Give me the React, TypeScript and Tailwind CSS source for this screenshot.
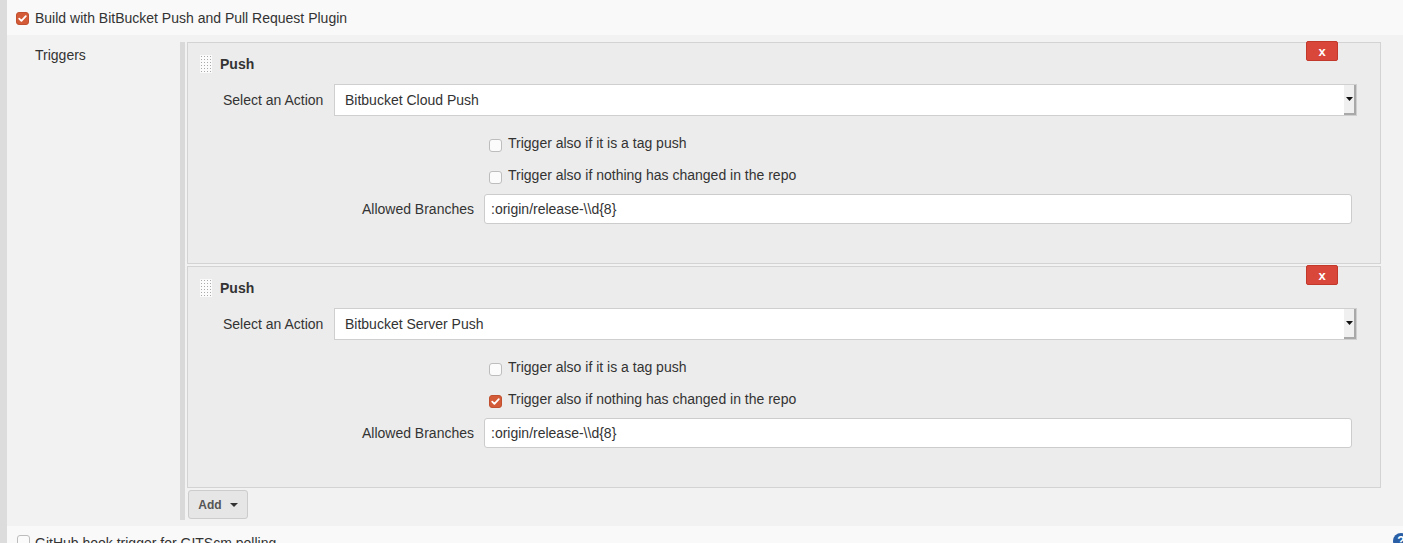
import React from "react";

function Check({ checked }: { checked?: boolean }) {
  if (checked) {
    return (
      <svg width="13" height="13" viewBox="0 0 13 13" className="shrink-0">
        <rect x="0.5" y="0.5" width="12" height="12" rx="2.5" fill="#d35b37" stroke="#c0502f" />
        <path d="M3.2 6.6 L5.4 8.8 L9.8 4.2" fill="none" stroke="#fff" strokeWidth="1.8" strokeLinecap="round" strokeLinejoin="round" />
      </svg>
    );
  }
  return (
    <svg width="13" height="13" viewBox="0 0 13 13" className="shrink-0">
      <rect x="0.5" y="0.5" width="12" height="12" rx="2.5" fill="#fbfbfb" stroke="#bdbdbd" />
    </svg>
  );
}

function Handle() {
  const dots: React.ReactElement[] = [];
  for (let r = 0; r < 6; r++) {
    for (let c = 0; c < 4; c++) {
      dots.push(<rect key={`${r}-${c}`} x={1 + c * 3} y={1 + r * 3} width="1" height="1" fill="#a8a8a8" />);
    }
  }
  return (
    <svg width="12" height="18" viewBox="0 0 12 18" className="shrink-0">
      <rect width="12" height="18" fill="#fbfbfb" />
      {dots}
    </svg>
  );
}

function Panel({ action, nothingChecked }: { action: string; nothingChecked?: boolean }) {
  return (
    <div className="relative h-[222px] shrink-0 border border-[#d3d3d3] bg-[#ececec]">
      <div className="absolute right-[42px] top-[-2px] flex h-[20px] w-[32px] items-center justify-center rounded-[2px] border border-[#c2392c] bg-[#d9463a] text-[13px] font-bold leading-none text-white">
        x
      </div>
      <div className="mt-[12px] flex h-[18px] items-center pl-[12px]">
        <Handle />
        <span className="ml-[8px] text-[14px] font-bold leading-4 text-[#333]">Push</span>
      </div>
      <div className="mt-[11px] flex h-[32px] items-center">
        <div className="w-[146px] pl-[35px] text-[14px] text-[#333]">Select an Action</div>
        <div className="flex h-[32px] w-[1023px] items-stretch border border-[#cfcfcf] bg-white">
          <div className="flex flex-1 items-center pl-[10px] text-[14px] text-[#333]">{action}</div>
          <div className="flex w-[12px] items-center justify-center border-b-[2px] border-r-[2px] border-[#a9a9a9] bg-[#f0f0f0]">
            <svg width="7" height="4" viewBox="0 0 7 4">
              <path d="M0 0 H7 L3.5 4 Z" fill="#111" />
            </svg>
          </div>
        </div>
      </div>
      <div className="mt-[11px] flex h-[32px] items-center pl-[301px]">
        <div className="mt-[5px]">
          <Check />
        </div>
        <span className="ml-[6px] text-[14px] text-[#333]">Trigger also if it is a tag push</span>
      </div>
      <div className="flex h-[32px] items-center pl-[301px]">
        <div className="mt-[5px]">
          <Check checked={nothingChecked} />
        </div>
        <span className="ml-[6px] text-[14px] text-[#333]">Trigger also if nothing has changed in the repo</span>
      </div>
      <div className="mt-[3px] flex h-[30px] items-center">
        <div className="w-[286px] text-right text-[14px] text-[#333]">Allowed Branches</div>
        <div className="ml-[10px] flex h-[30px] w-[868px] items-center rounded-[3px] border border-[#cccccc] bg-white pl-[6px] text-[14px] text-[#333]">
          :origin/release-\\d{"{8}"}
        </div>
      </div>
    </div>
  );
}

export default function App() {
  return (
    <div className="relative flex h-[543px] w-[1403px] overflow-hidden bg-[#f2f2f2] font-['Liberation_Sans',Arial,sans-serif]">
      <div className="w-[7px] shrink-0 bg-[#dcdcdc]" />
      <div className="flex flex-1 flex-col">
        <div className="flex h-[35px] shrink-0 items-center bg-[#f9f9f9] pl-[9px] pt-[2px]">
          <Check checked />
          <span className="ml-[6px] text-[14px] text-[#333]">Build with BitBucket Push and Pull Request Plugin</span>
        </div>
        <div className="flex h-[491px] shrink-0 bg-[#f2f2f2]">
          <div className="w-[171px] shrink-0 pl-[28px] pt-[12px] text-[14px] leading-4 text-[#333]">Triggers</div>
          <div className="flex h-[485px] pt-[7px]">
            <div className="ml-[2px] w-[5px] bg-[#d9d9d9]" />
            <div className="ml-[2px] flex w-[1194px] flex-col">
              <Panel action="Bitbucket Cloud Push" />
              <div className="mt-[2px] shrink-0">
                <Panel action="Bitbucket Server Push" nothingChecked />
              </div>
              <div className="ml-[1px] mt-[2px] flex h-[29px] w-[60px] shrink-0 items-center justify-center gap-[8px] rounded-[3px] border border-[#cccccc] bg-[#e6e6e6] text-[12px] font-bold text-[#555]">
                <span>Add</span>
                <svg width="8" height="4" viewBox="0 0 8 4">
                  <path d="M0 0 H8 L4 4 Z" fill="#333" />
                </svg>
              </div>
            </div>
          </div>
        </div>
        <div className="relative flex-1 bg-[#f9f9f9] pl-[10px] pt-[9px]">
          <div className="flex items-start">
            <Check />
            <span className="ml-[5px] text-[14px] leading-4 text-[#333]">GitHub hook trigger for GITScm polling</span>
          </div>
          <div className="absolute left-[1386px] top-[7px] flex h-[16px] w-[16px] items-center justify-center rounded-full bg-[#2a5fa6] text-[12px] font-bold leading-none text-white">
            ?
          </div>
        </div>
      </div>
    </div>
  );
}
